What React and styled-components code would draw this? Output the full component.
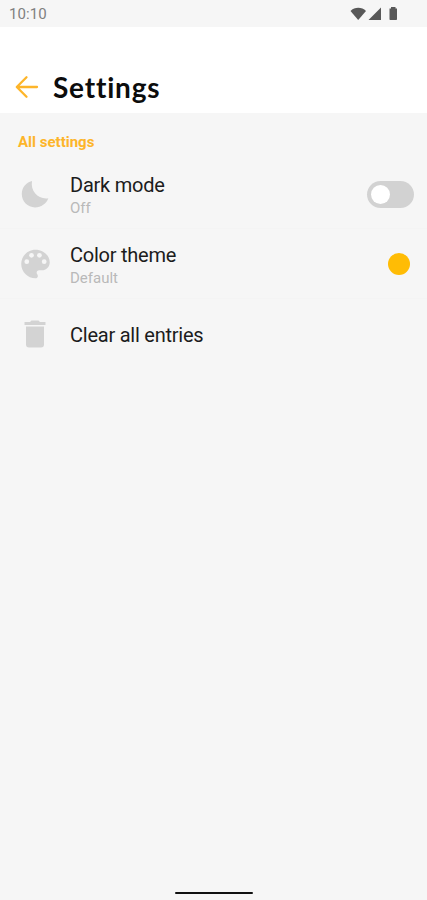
import React from 'react';
import styled, { createGlobalStyle } from 'styled-components';

const GlobalStyle = createGlobalStyle`
  * {
    box-sizing: border-box;
  }
  body {
    margin: 0;
    background: #f6f6f6;
    font-family: Roboto, 'Liberation Sans', sans-serif;
  }
`

const Screen = styled.div`
  display: flex;
  flex-direction: column;
  height: 900px;
  background: #f6f6f6;
`

const StatusBar = styled.div`
  display: flex;
  align-items: center;
  justify-content: space-between;
  height: 27px;
  padding: 1px 28px 0 9px;
`

const Clock = styled.span`
  font-size: 15px;
  line-height: 18px;
  letter-spacing: 0.1px;
  color: #808080;
`

const Header = styled.header`
  display: flex;
  align-items: center;
  height: 86px;
  padding: 34px 15px 0;
  background: #ffffff;
`

const Title = styled.h1`
  margin: 0 0 0 14px;
  font-family: Lato, sans-serif;
  font-size: 28px;
  font-weight: 700;
  font-variant-ligatures: none;
  letter-spacing: 0.8px;
  line-height: 34px;
  color: #0c0c0c;
`

const SectionTitle = styled.h2`
  margin: 0;
  padding: 20px 18px 0;
  height: 46px;
  font-size: 15px;
  font-weight: 700;
  line-height: 18px;
  color: #fdb52a;
`

const Row = styled.div`
  display: flex;
  align-items: center;
  height: 70px;
  padding: 0 ${props => props.$end || 13}px 0 15px;

  & + & {
    box-shadow: 0 -1px 0 #f4f4f4;
  }
`

const RowIcon = styled.div`
  display: flex;
  justify-content: center;
  width: 40px;
  margin-right: 15px;
`

const RowText = styled.div`
  display: flex;
  flex: 1;
  flex-direction: column;
  padding-top: 2px;
`

const Label = styled.span`
  font-size: 20px;
  line-height: 24px;
  letter-spacing: -0.24px;
  color: #1c1c1c;
`

const Value = styled.span`
  font-size: 15px;
  line-height: 18px;
  margin-top: 2px;
  color: #b9b9b9;
`

const Toggle = styled.div`
  display: flex;
  align-items: center;
  width: 47px;
  height: 27px;
  padding: 0 4px;
  border-radius: 14px;
  background: #d2d2d2;
`

const Knob = styled.div`
  width: 19px;
  height: 19px;
  border-radius: 50%;
  background: #ffffff;
`

const ColorDot = styled.div`
  width: 22px;
  height: 22px;
  border-radius: 50%;
  background: #ffbc05;
`

const NavArea = styled.footer`
  display: flex;
  justify-content: center;
  margin-top: auto;
  padding-bottom: 6px;
`

const NavHandle = styled.div`
  width: 78px;
  height: 2px;
  border-radius: 1px;
  background: #111111;
`

function StatusIcons() {
  return (
    <svg width="49" height="14" viewBox="0 0 49 14" fill="#585858">
      <path d="M0.5 4C4.5-.2 12-.2 16 4L8.2 13Z" />
      <path d="M18.5 13H31V.5Z" />
      <path d="M39.5 1.5H41V0H45.5V1.5H47V12.2Q47 13 46.2 13H40.3Q39.5 13 39.5 12.2Z" />
    </svg>
  );
}

function BackArrow() {
  return (
    <svg width="24" height="24" viewBox="0 0 24 24" fill="none" stroke="#fdb52a" strokeWidth="2.3" strokeLinecap="round" strokeLinejoin="round">
      <path d="M22 12H2M11.5 2.3L1.8 12L11.5 21.7" />
    </svg>
  );
}

function MoonIcon() {
  return (
    <svg width="28" height="28" viewBox="0 0 28 28" fill="#d3d3d3">
      <path d="M11 1C4.8 2.5 .8 7.8 .8 14.1C.8 21.6 6.6 27.4 14 27.4C20 27.4 25.6 23.7 27.3 18.3C17.5 19.8 9.2 11.4 11 1Z" />
    </svg>
  );
}

function PaletteIcon() {
  return (
    <svg width="38" height="38" viewBox="-0.3 0 24 24" fill="#d3d3d3">
      <path d="M12 3c-4.97 0-9 4.03-9 9s4.03 9 9 9c.83 0 1.5-.67 1.5-1.5 0-.39-.15-.74-.39-1.01-.23-.26-.38-.61-.38-.99 0-.83.67-1.5 1.5-1.5H16c2.76 0 5-2.24 5-5 0-4.42-4.03-8-9-8z" />
      <g fill="#f6f6f6">
        <circle cx="6.5" cy="10.5" r="1.5" />
        <circle cx="9.5" cy="6.5" r="1.5" />
        <circle cx="14.5" cy="6.5" r="1.5" />
        <circle cx="17.5" cy="10.5" r="1.5" />
      </g>
    </svg>
  );
}

function TrashIcon() {
  return (
    <svg width="22" height="28" viewBox="0 0 22 28" fill="#d3d3d3">
      <path d="M2 6.5H20V24.5Q20 27.5 17 27.5H5Q2 27.5 2 24.5Z" />
      <path d="M.5 2H6L7.5.5H14.5L16 2H21.5V5H.5Z" />
    </svg>
  );
}

function App() {
  return (
    <>
      <GlobalStyle />
      <Screen>
        <StatusBar>
          <Clock>10:10</Clock>
          <StatusIcons />
        </StatusBar>
        <Header>
          <BackArrow />
          <Title>Settings</Title>
        </Header>

        <SectionTitle>All settings</SectionTitle>
        <Row>
          <RowIcon><MoonIcon /></RowIcon>
          <RowText>
            <Label>Dark mode</Label>
            <Value>Off</Value>
          </RowText>
          <Toggle><Knob /></Toggle>
        </Row>
        <Row $end={17}>
          <RowIcon><PaletteIcon /></RowIcon>
          <RowText>
            <Label>Color theme</Label>
            <Value>Default</Value>
          </RowText>
          <ColorDot />
        </Row>
        <Row>
          <RowIcon><TrashIcon /></RowIcon>
          <RowText>
            <Label>Clear all entries</Label>
          </RowText>
        </Row>

        <NavArea>
          <NavHandle />
        </NavArea>
      </Screen>
    </>
  );
}

export default App;
